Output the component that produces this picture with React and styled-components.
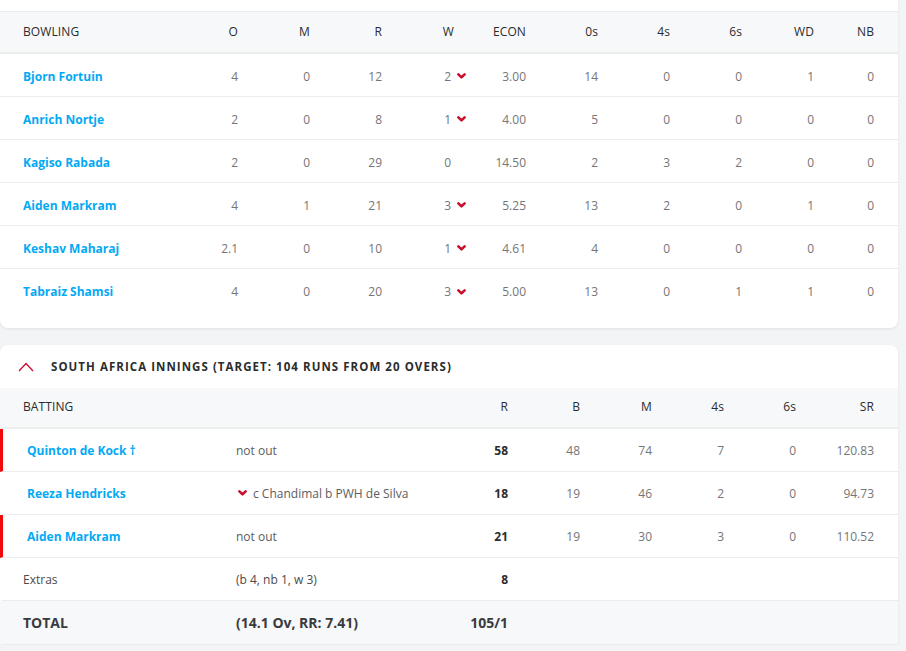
import React from 'react';
import styled, { createGlobalStyle } from 'styled-components';

const GlobalStyle = createGlobalStyle`
  *, *::before, *::after {
    box-sizing: border-box;
  }
  body {
    margin: 0;
    background: #f3f4f5;
    font-family: 'Open Sans', 'Noto Sans', sans-serif;
  }
`;

const bowlers = [
  { name: 'Bjorn Fortuin', o: '4', m: '0', r: '12', w: '2', wk: true, econ: '3.00', dots: '14', f: '0', s: '0', wd: '1', nb: '0' },
  { name: 'Anrich Nortje', o: '2', m: '0', r: '8', w: '1', wk: true, econ: '4.00', dots: '5', f: '0', s: '0', wd: '0', nb: '0' },
  { name: 'Kagiso Rabada', o: '2', m: '0', r: '29', w: '0', wk: false, econ: '14.50', dots: '2', f: '3', s: '2', wd: '0', nb: '0' },
  { name: 'Aiden Markram', o: '4', m: '1', r: '21', w: '3', wk: true, econ: '5.25', dots: '13', f: '2', s: '0', wd: '1', nb: '0' },
  { name: 'Keshav Maharaj', o: '2.1', m: '0', r: '10', w: '1', wk: true, econ: '4.61', dots: '4', f: '0', s: '0', wd: '0', nb: '0' },
  { name: 'Tabraiz Shamsi', o: '4', m: '0', r: '20', w: '3', wk: true, econ: '5.00', dots: '13', f: '0', s: '1', wd: '1', nb: '0' }
];

const batters = [
  { name: 'Quinton de Kock †', notOut: true, how: 'not out', r: '58', b: '48', m: '74', f: '7', s: '0', sr: '120.83' },
  { name: 'Reeza Hendricks', notOut: false, how: 'c Chandimal b PWH de Silva', r: '18', b: '19', m: '46', f: '2', s: '0', sr: '94.73' },
  { name: 'Aiden Markram', notOut: true, how: 'not out', r: '21', b: '19', m: '30', f: '3', s: '0', sr: '110.52' }
];

const Page = styled.div`
  width: 898px;
  display: flex;
  flex-direction: column;
  gap: 17px;
`;

const Card = styled.div`
  background: #fff;
  border-radius: ${({ $top }) => ($top ? '8px 8px 0 0' : '0 0 8px 8px')};
  box-shadow: 0 1px 3px rgba(0, 0, 0, 0.08);
  padding: ${({ $top }) => ($top ? '0' : '11px 0 16px')};
`;

const BowlRow = styled.div`
  display: grid;
  grid-template-columns: 1fr repeat(9, 72px) 60px;
  align-items: center;
  height: 43px;
  padding: ${({ $head }) => ($head ? '0 24px 2px 23px' : '2px 24px 0 23px')};
  background: ${({ $head }) => ($head ? '#f7f8f9' : '#fff')};
  border-top: ${({ $head }) => ($head ? '1px solid #ebeced' : 'none')};
  border-bottom: ${({ $head, $last }) =>
    $head ? '2px solid #eceded' : $last ? 'none' : '1px solid #ebeced'};
`;

const HeadCell = styled.div`
  font-size: 12px;
  color: #2b2c2d;
  text-align: ${({ $left }) => ($left ? 'left' : 'right')};
  letter-spacing: 0.1px;
`;

const NumCell = styled.div`
  font-size: 12px;
  color: ${({ $bold }) => ($bold ? '#2b2c2d' : '#747577')};
  text-align: right;
  font-weight: ${({ $bold }) => ($bold ? 700 : 400)};
`;

const WicketCell = styled.div`
  display: flex;
  justify-content: flex-end;
  align-items: center;
  font-size: 12px;
  color: #747577;
  padding-right: 3px;
`;

const WicketIcon = styled.svg`
  width: 9px;
  height: 6px;
  flex-shrink: 0;
`;

const PlayerName = styled.a`
  font-size: 12px;
  font-weight: 700;
  color: #03a9f4;
  text-decoration: none;
`;

const TitleRow = styled.div`
  display: flex;
  align-items: center;
  gap: 17px;
  height: 43px;
  padding-left: 18px;
`;

const TitleText = styled.div`
  font-size: 11.5px;
  font-weight: 700;
  letter-spacing: 1.05px;
  color: #2b2c2d;
`;

const BatRow = styled.div`
  display: grid;
  grid-template-columns: 1fr 200px repeat(5, 72px) 78px;
  align-items: center;
  height: ${({ $head }) => ($head ? '41px' : '43px')};
  padding: ${({ $head }) => ($head ? '0 24px 3px' : '0 24px')};
  padding-left: ${({ $flush }) => ($flush ? '20px' : '24px')};
  border-left: 3px solid ${({ $mark }) => ($mark ? '#f00a0a' : 'transparent')};
  background: ${({ $head }) => ($head ? '#f7f8f9' : '#fff')};
  border-bottom: ${({ $head }) => ($head ? '2px solid #eceded' : '1px solid #ebeced')};
`;

const TotalRow = styled(BatRow)`
  height: 44px;
  background: #f7f8f9;
  border-left-color: transparent;
`;

const Dismissal = styled.div`
  display: flex;
  align-items: center;
  gap: 6px;
  font-size: 12px;
  color: #5b5c5e;
`;

const PlainText = styled.div`
  font-size: 12px;
  color: #4a4b4d;
`;

const TotalText = styled.div`
  font-size: 14px;
  font-weight: 700;
  color: #3a3b3d;
  text-align: ${({ $right }) => ($right ? 'right' : 'left')};
`;

function Chevron({ ml = 6, mr = -15 }) {
  return (
    <WicketIcon viewBox="0 0 9 6" style={{ marginLeft: ml, marginRight: mr }}>
      <path d="M1.4 1.4 L4.5 4.4 L7.6 1.4" fill="none" stroke="#c8102e" strokeWidth="2.6" strokeLinecap="round" strokeLinejoin="round" />
    </WicketIcon>
  );
}

function BowlingCard() {
  const heads = ['O', 'M', 'R', 'W', 'ECON', '0s', '4s', '6s', 'WD', 'NB'];
  return (
    <Card>
      <BowlRow $head>
        <HeadCell $left>BOWLING</HeadCell>
        {heads.map((h) => (
          <HeadCell key={h}>{h}</HeadCell>
        ))}
      </BowlRow>
      {bowlers.map((b, i) => (
        <BowlRow key={b.name} $last={i === bowlers.length - 1}>
          <PlayerName>{b.name}</PlayerName>
          <NumCell>{b.o}</NumCell>
          <NumCell>{b.m}</NumCell>
          <NumCell>{b.r}</NumCell>
          <WicketCell>
            {b.w}
            {b.wk && <Chevron />}
          </WicketCell>
          <NumCell>{b.econ}</NumCell>
          <NumCell>{b.dots}</NumCell>
          <NumCell>{b.f}</NumCell>
          <NumCell>{b.s}</NumCell>
          <NumCell>{b.wd}</NumCell>
          <NumCell>{b.nb}</NumCell>
        </BowlRow>
      ))}
    </Card>
  );
}

function BattingCard() {
  const heads = ['R', 'B', 'M', '4s', '6s', 'SR'];
  return (
    <Card $top>
      <TitleRow>
        <svg width="16" height="10" viewBox="0 0 16 10">
          <path d="M1 9 L8 1.5 L15 9" fill="none" stroke="#c8102e" strokeWidth="1.3" />
        </svg>
        <TitleText>SOUTH AFRICA INNINGS (TARGET: 104 RUNS FROM 20 OVERS)</TitleText>
      </TitleRow>
      <BatRow $head $flush>
        <HeadCell $left>BATTING</HeadCell>
        <div />
        {heads.map((h) => (
          <HeadCell key={h}>{h}</HeadCell>
        ))}
      </BatRow>
      {batters.map((b) => (
        <BatRow key={b.name} $mark={b.notOut}>
          <PlayerName>{b.name}</PlayerName>
          <Dismissal>
            {!b.notOut && <Chevron ml={2} mr={0} />}
            {b.how}
          </Dismissal>
          <NumCell $bold>{b.r}</NumCell>
          <NumCell>{b.b}</NumCell>
          <NumCell>{b.m}</NumCell>
          <NumCell>{b.f}</NumCell>
          <NumCell>{b.s}</NumCell>
          <NumCell>{b.sr}</NumCell>
        </BatRow>
      ))}
      <BatRow $flush>
        <PlainText>Extras</PlainText>
        <PlainText>(b 4, nb 1, w 3)</PlainText>
        <NumCell $bold>8</NumCell>
      </BatRow>
      <TotalRow $flush>
        <TotalText>TOTAL</TotalText>
        <TotalText>(14.1 Ov, RR: 7.41)</TotalText>
        <TotalText $right>105/1</TotalText>
      </TotalRow>
    </Card>
  );
}

export default function App() {
  return (
    <Page>
      <GlobalStyle />
      <BowlingCard />
      <BattingCard />
    </Page>
  );
}
